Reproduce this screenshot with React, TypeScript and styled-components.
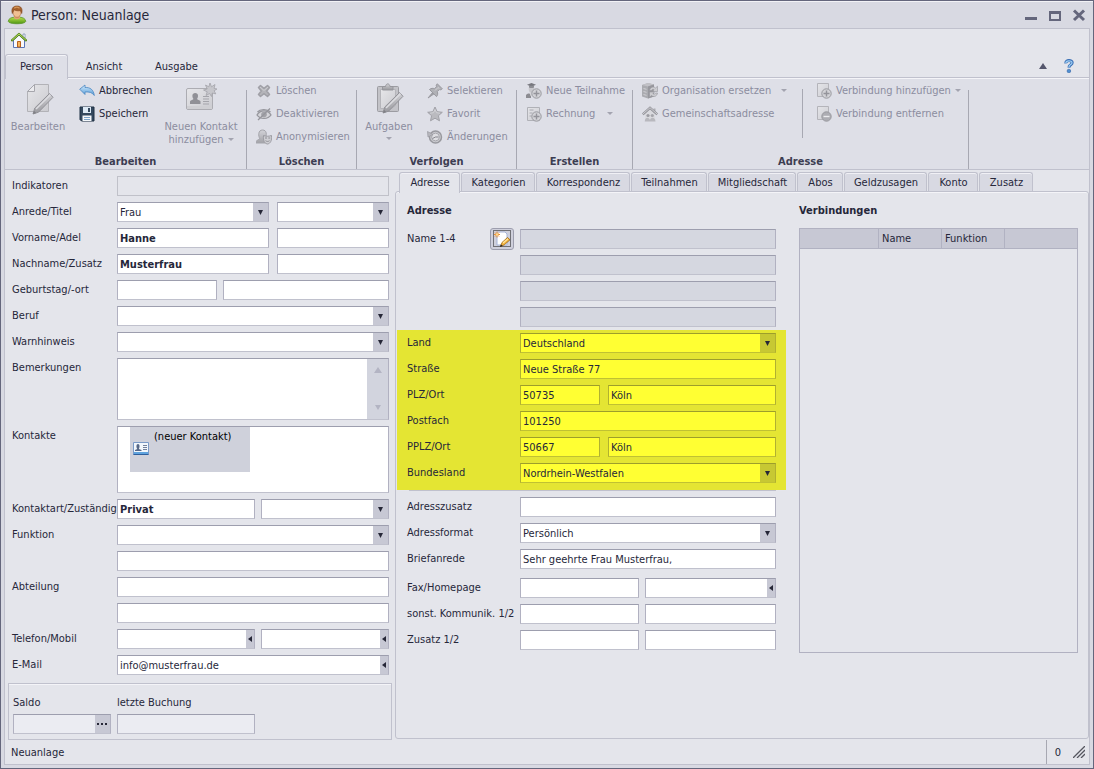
import React from 'react';
import styled, { createGlobalStyle, css } from 'styled-components';

const c = {
  frame: '#64667c',
  chrome: '#d8d9e2',
  panel: '#e4e5eb',
  ribbon: '#dedfe7',
  line: '#c0c1cd',
  divider: '#a7a8b2',
  text: '#26273a',
  muted: '#8c8d9f',
  button: '#c7c8d4',
};

const GlobalStyle = createGlobalStyle`
  * { box-sizing: border-box; }
  body { margin: 0; background: ${c.chrome}; }
  body, input, select, textarea, button, table {
    font-family: "DejaVu Sans Condensed", "DejaVu Sans", sans-serif;
    font-size: 11px;
    line-height: 14px;
    color: ${c.text};
  }
  button { margin: 0; padding: 0; border: 0; background: none; }
`;

/* ---------- window ---------- */

const Window = styled.div`
  display: flex;
  flex-direction: column;
  min-height: 100vh;
  padding: 0 3px 3px;
  border: 1px solid ${c.frame};
  background: ${c.chrome};
  box-shadow: inset 0 1px 0 #f2f2f6;
`;

const TitleBar = styled.header`
  display: flex;
  align-items: center;
  gap: 4px;
  height: 27px;
  padding: 0 1px 0 3px;
`;

const Title = styled.h1`
  flex: 1;
  margin: 0;
  font-size: 14px;
  line-height: 18px;
  font-weight: 400;
`;

const WindowButton = styled.button`
  display: grid;
  place-items: center;
  width: 20px;
  height: 20px;
`;

const Client = styled.div`
  flex: 1;
  display: flex;
  flex-direction: column;
  border: 1px solid ${c.line};
  background: ${c.panel};
`;

const QuickBar = styled.div`
  display: flex;
  align-items: center;
  height: 25px;
  padding: 0 6px;
`;

/* ---------- ribbon ---------- */

const RibbonTabs = styled.div`
  display: flex;
  align-items: stretch;
  height: 24px;
  padding-right: 12px;
  border-bottom: 1px solid ${c.line};
`;

const RibbonTab = styled.button<{ $active?: boolean }>`
  min-width: 60px;
  margin-right: 10px;
  padding: 2px 10px 0;
  border: 1px solid transparent;
  ${p =>
    p.$active &&
    css`
      min-width: 63px;
      margin-bottom: -2px;
      margin-right: 6px;
      border-color: ${c.line};
      border-bottom: 0;
      border-radius: 3px 3px 0 0;
      background: ${c.ribbon};
      box-shadow: inset 0 1px 0 #f4f4f8;
      padding-bottom: 2px;
      z-index: 1;
    `}
`;

const Spacer = styled.div`
  flex: 1;
`;

const TabTool = styled.button`
  display: grid;
  place-items: center;
  width: 16px;
  margin-left: 10px;
`;

const Ribbon = styled.div`
  display: flex;
  border-bottom: 1px solid ${c.line};
  background: ${c.ribbon};
  box-shadow: inset 0 1px 0 #f4f4f8;
`;

const Group = styled.section<{ $width: number }>`
  display: flex;
  flex-direction: column;
  width: ${p => p.$width}px;
  height: 91px;
  padding-top: 1px;
`;

const GroupBody = styled.div<{ $inset: number }>`
  flex: 1;
  display: flex;
  align-items: flex-start;
  padding-left: ${p => p.$inset}px;
`;

const GroupTitle = styled.h2`
  margin: 0;
  font-size: 11px;
  line-height: 14px;
  font-weight: 700;
  text-align: center;
  color: #3c3d52;
`;

const GroupDivider = styled.div`
  width: 1px;
  margin-top: 12px;
  background: ${c.divider};
`;

const InnerDivider = styled.div`
  width: 1px;
  height: 49px;
  margin-top: 10px;
  background: ${c.divider};
`;

const Commands = styled.div<{ $width: number }>`
  display: flex;
  flex-direction: column;
  width: ${p => p.$width}px;
`;

const Command = styled.button`
  display: flex;
  align-items: center;
  gap: 4px;
  height: 23px;
  white-space: nowrap;
  text-align: left;
  &:disabled { color: ${c.muted}; }
  svg { flex: none; }
  &:disabled svg { opacity: 0.85; }
`;

const Caret = styled.span<{ $gap?: number; $below?: boolean }>`
  display: inline-block;
  margin-left: ${p => p.$gap ?? 4}px;
  margin-top: ${p => (p.$below ? 4 : 0)}px;
  border: 3px solid transparent;
  border-top-color: #a3a4b0;
  border-bottom: 0;
  vertical-align: 2px;
`;

const BigCommand = styled.button<{ $width: number }>`
  display: flex;
  flex-direction: column;
  align-items: center;
  width: ${p => p.$width}px;
  padding-top: 4px;
  line-height: 13px;
  white-space: nowrap;
  &:disabled { color: ${c.muted}; }
  svg { margin-bottom: 5px; }
`;

/* ---------- forms ---------- */

const Main = styled.main`
  flex: 1;
  display: grid;
  grid-template-columns: minmax(0, 390fr) minmax(0, 694fr);
`;

const PersonForm = styled.form`
  display: flex;
  flex-direction: column;
  padding: 6px 3px 0;
`;

const PersonRows = styled.div`
  display: flex;
  flex-direction: column;
  gap: 6px;
  padding: 0 3px 0 4px;
`;

const Row = styled.div<{ $label: number }>`
  display: grid;
  grid-template-columns: ${p => p.$label}px minmax(0, 1fr);
`;

const Label = styled.label`
  line-height: 20px;
  white-space: nowrap;
`;

const Split = styled.div<{ $cols: string; $gap?: number }>`
  display: grid;
  grid-template-columns: ${p => p.$cols};
  gap: ${p => p.$gap ?? 6}px;
`;

type Tone = 'plain' | 'yellow' | 'grey' | 'flat' | 'light';

const tones: Record<Tone, { bg: string; top: string; side: string; bottom: string; button: string }> = {
  plain: { bg: '#ffffff', top: '#9d9eae', side: '#b1b1c1', bottom: '#c0c1cd', button: c.button },
  yellow: { bg: '#ffff33', top: '#9d9e2b', side: '#b1b130', bottom: '#c0c133', button: '#c7c833' },
  grey: { bg: '#d5d7e0', top: '#9d9eae', side: '#b1b1c1', bottom: '#c0c1cd', button: c.button },
  flat: { bg: '#e4e5eb', top: '#c0c1c9', side: '#c0c1c9', bottom: '#c0c1c9', button: c.button },
  light: { bg: '#ebecf2', top: '#9d9eae', side: '#b1b1c1', bottom: '#c0c1cd', button: c.button },
};

const Box = styled.div<{ $tone: Tone; $height?: number }>`
  position: relative;
  display: flex;
  height: ${p => p.$height ?? 20}px;
  border: 1px solid;
  border-color: ${p => `${tones[p.$tone].top} ${tones[p.$tone].side} ${tones[p.$tone].bottom}`};
  background: ${p => tones[p.$tone].bg};
`;

const control = css<{ $bold?: boolean }>`
  flex: 1;
  width: 100%;
  min-width: 0;
  margin: 0;
  padding: 1px 2px 0;
  border: 0;
  border-radius: 0;
  outline: 0;
  background: transparent;
  font-weight: ${p => (p.$bold ? 700 : 400)};
`;

const Input = styled.input`${control}`;
const Area = styled.textarea`${control} resize: none;`;
const Select = styled.select`
  ${control}
  appearance: none;
  padding-right: 17px;
  opacity: 1;
`;

const SelectArrow = styled.span<{ $tone: Tone }>`
  position: absolute;
  top: 0;
  right: 0;
  bottom: 0;
  display: grid;
  place-items: center;
  width: 15px;
  background: ${p => tones[p.$tone].button};
  pointer-events: none;
`;

const SideButton = styled.button<{ $width: number }>`
  display: grid;
  place-items: center;
  width: ${p => p.$width}px;
  background: ${c.button};
`;

const ScrollStrip = styled.div`
  display: flex;
  flex-direction: column;
  justify-content: space-between;
  align-items: center;
  width: 21px;
  padding: 8px 0;
  background: #d2d4de;
`;

const ContactItem = styled.div`
  display: flex;
  align-items: flex-start;
  gap: 5px;
  width: 120px;
  height: 45px;
  margin-left: 12px;
  padding: 3px;
  background: #cfd1db;
  color: #000;
  svg { margin-top: 12px; }
`;

const BookingBox = styled.fieldset`
  display: grid;
  grid-template-columns: 98px 138px;
  column-gap: 6px;
  margin: 8px 0 0;
  padding: 9px 4px 5px;
  border: 1px solid ${c.line};
  box-shadow: inset 0 1px 0 #f4f4f8;
`;

const BookingLabel = styled(Label)`
  margin-bottom: 1px;
`;

/* ---------- tab area ---------- */

const TabArea = styled.section`
  display: flex;
  flex-direction: column;
  padding: 2px 0 1px;
`;

const TabList = styled.div`
  display: flex;
  gap: 1px;
  height: 19px;
  padding-left: 4px;
`;

const Tab = styled.button<{ $active?: boolean; $grow: number }>`
  width: ${p => p.$grow}px;
  padding: 2px 0 0 1px;
  border: 1px solid ${c.line};
  border-bottom: 0;
  border-radius: 3px 3px 0 0;
  background: ${p => (p.$active ? c.panel : '#d8d9e2')};
  white-space: nowrap;
  box-shadow: inset 0 1px 0 #f0f0f5;
  ${p => p.$active && css`
    margin-bottom: -2px;
    padding-bottom: 2px;
    z-index: 1;
  `}
`;

const TabPanel = styled.div`
  flex: 1;
  display: grid;
  grid-template-columns: minmax(0, 389fr) minmax(0, 302fr);
  padding-left: 1px;
  border: 1px solid ${c.line};
  border-radius: 3px;
  box-shadow: inset 0 1px 0 #f4f4f8;
`;

const Heading = styled.h2`
  margin: 0;
  padding-top: 2px;
  font-size: 11px;
  line-height: 34px;
  font-weight: 700;
`;

const Section = styled.div<{ $yellow?: boolean }>`
  display: flex;
  flex-direction: column;
  gap: 6px;
  padding: ${p => (p.$yellow ? '3px 10px 7px' : '0 10px')};
  background: ${p => (p.$yellow ? '#e4e533' : 'transparent')};
`;

const Gap = styled.div<{ $size: number }>`
  height: ${p => p.$size}px;
`;

const Rule = styled.hr`
  width: auto;
  height: 1px;
  margin: 0 10px 6px 12px;
  border: 0;
  background: ${c.line};
`;

const LabelCell = styled.div`
  display: flex;
  justify-content: space-between;
  padding-right: 6px;
`;

const NameButton = styled.button`
  display: grid;
  place-items: center;
  width: 24px;
  height: 22px;
  margin: -1px 0;
  border: 1px solid #9d9eae;
  border-radius: 3px;
  background: #cfd0dc;
`;

const Connections = styled.div`
  padding: 0 10px 0 13px;
`;

const GridFrame = styled.div`
  height: 425px;
  border: 1px solid #b1b1c1;
`;

const Grid = styled.table`
  width: 100%;
  table-layout: fixed;
  border-collapse: separate;
  border-spacing: 0;
  th {
    height: 20px;
    padding: 0 3px;
    border-right: 1px solid #b1b2c2;
    border-bottom: 1px solid #b1b2c2;
    background: ${c.button};
    font-weight: 400;
    text-align: left;
  }
  th:last-child { border-right: 0; }
`;

const StatusBar = styled.footer`
  display: flex;
  align-items: center;
  height: 24px;
  padding-left: 6px;
`;

const StatusText = styled.span`
  padding-top: 2px;
`;

const StatusCell = styled.div`
  display: flex;
  align-items: center;
  align-self: stretch;
  gap: 12px;
  padding: 0 4px 0 8px;
  border-left: 1px solid ${c.divider};
`;

/* ---------- icons ---------- */

const Svg = ({ s = 16, children }: { s?: number; children: React.ReactNode }) => (
  <svg width={s} height={s} viewBox={`0 0 ${s} ${s}`} aria-hidden="true">{children}</svg>
);

const Gradients = () => (
  <svg width="0" height="0" style={{ display: 'block' }} aria-hidden="true">
    <defs>
      <linearGradient id="metal" x1="0" y1="0" x2="0" y2="1">
        <stop offset="0" stopColor="#d2d2d6" /><stop offset="1" stopColor="#98989d" />
      </linearGradient>
      <linearGradient id="sheet" x1="0" y1="0" x2="1" y2="1">
        <stop offset="0" stopColor="#e6e6e9" /><stop offset="1" stopColor="#cbcbd0" />
      </linearGradient>
      <linearGradient id="sky" x1="0" y1="0" x2="0" y2="1">
        <stop offset="0" stopColor="#d8efff" /><stop offset="1" stopColor="#4f97d4" />
      </linearGradient>
      <linearGradient id="grass" x1="0" y1="0" x2="0" y2="1">
        <stop offset="0" stopColor="#b6e04c" /><stop offset="1" stopColor="#4f9614" />
      </linearGradient>
    </defs>
  </svg>
);

const UserIcon = () => (
  <svg width="20" height="20" viewBox="0 0 20 20" aria-hidden="true">
    <path d="M1.300 16.500c0-3 3-4 5.700-4.300h6c2.700.3 5.700 1.300 5.700 4.300-1 3-16.400 3-17.400 0z" fill="url(#grass)" stroke="#5a9428" strokeWidth=".8" />
    <path d="M7 10.500h6v2.300c-1 2-5 2-6 0z" fill="#dfa272" />
    <ellipse cx="10" cy="7.500" rx="4" ry="4.800" fill="#f0bf92" stroke="#a8683a" strokeWidth=".6" />
    <path d="M5.300 8.500C4 3.500 6 1 10 1s6 2.500 4.700 7.500l-1.200-3c-2 .6-5 .3-6.500-.8z" fill="#a5602b" stroke="#7d451c" strokeWidth=".6" />
    <path d="M7.300 3.200c1.500-1.200 3.500-1.200 5.200 0" stroke="#d6995c" strokeWidth="1.200" fill="none" />
  </svg>
);

const HomeIcon = () => (
  <Svg>
    <path d="M12 2h2v4h-2z" fill="#fff" stroke="#7b8fae" strokeWidth=".8" />
    <path d="M2.500 8 8 3l5.500 5v7.500h-11z" fill="#f8f9fd" stroke="#5b76b8" />
    <path d="M6.500 9.500h3v5.500h-3z" fill="#f4b45c" stroke="#b8601c" />
    <path d="M1 8.300 8 2l7 6.300" fill="none" stroke="#55831f" strokeWidth="2.300" strokeLinejoin="round" strokeLinecap="round" />
    <path d="M1.200 8.100 8 2l6.800 6.100" fill="none" stroke="#b6df58" />
  </Svg>
);

const Pencil = () => (
  <g>
    <path d="M10 30l1.800-6L26.500 9.500l3.500 3.800L15.500 28.200z" fill="url(#metal)" stroke="#929298" />
    <path d="M13 25 27.500 10.800" stroke="#dcdce0" strokeWidth="1.500" />
    <path d="M10 30l1-3.200 2.100 2.200z" fill="#808086" />
  </g>
);

const EditIcon = () => (
  <Svg s={32}>
    <path d="M12.500 1.500h14v27h-21v-20z" fill="url(#sheet)" stroke="#b2b2b7" />
    <path d="M12.500 1.500v7h-7z" fill="#ebebee" stroke="#a6a6ac" />
    <g transform="translate(1 1)"><Pencil /></g>
  </Svg>
);

const ContactCardIcon = () => (
  <Svg s={32}>
    <rect x="1.500" y="5.500" width="26" height="21" rx="1.500" fill="url(#sheet)" stroke="#acacb2" />
    <path d="M2 23h25v3H2z" fill="#cfcfd3" />
    <path d="M5 21v-2.500c0-1.300 2.500-1.500 3.500-2.500-1.500-2-1.800-6 1.700-6s3.300 4 1.800 6c1 1 3.500 1.200 3.500 2.500V21z" fill="#909096" />
    <path d="M18 13.500h6M18 16h6M18 18.500h6M18 21h6" stroke="#a5a5ab" />
    <path d="m25 0 1.500 3.800L30 1.500l-.9 3.900 2.900.6-2.900 1.700 1.700 3.200-3.500-.9-.8 3.500-1.900-3-3.600 2 1.200-3.700L18.500 7l3.700-1-1.700-4 3.300 1.800z" fill="#c6c6cb" stroke="#a3a3a9" strokeWidth=".8" />
  </Svg>
);

const TaskIcon = () => (
  <Svg s={32}>
    <rect x="4.500" y="3.500" width="21" height="25" rx="1" fill="#c3c3c8" stroke="#9c9ca2" />
    <path d="M7.500 6.500h15v16l-4 3h-11z" fill="url(#sheet)" stroke="#b5b5ba" />
    <path d="M9.500 7V3.500h3c.5-3.500 4-3.500 4.500 0h3V7z" fill="url(#metal)" stroke="#97979d" />
    <Pencil />
  </Svg>
);

const UndoIcon = () => (
  <Svg>
    <path d="M.7 6.200 6 2v2.500c5-.3 8.500 2 9.300 8-2-3-5-3.900-9.300-3.500v2.500z" fill="url(#sky)" stroke="#4a86c2" strokeWidth=".8" strokeLinejoin="round" />
  </Svg>
);

const SaveIcon = () => (
  <Svg>
    <path d="M1 1h14v14H2.500L1 13.500z" fill="#34495f" stroke="#1f3044" />
    <path d="M4 1h8v6H4z" fill="#dce9f5" />
    <path d="M9 2h2v4H9z" fill="#34495f" />
    <path d="M3.500 9.500h9V15h-9z" fill="#f4f7fa" />
    <path d="M5 11.500h6M5 13.500h6" stroke="#7da5cc" />
  </Svg>
);

const CrossIcon = () => (
  <Svg>
    <path d="M2.500 4.500 4.500 2.500 8 5.300 11.500 2.500l2 2L10.700 8l2.800 3.500-2 2L8 10.700 4.500 13.500l-2-2L5.300 8z" fill="#adadb2" stroke="#96969c" strokeWidth="1.500" strokeLinejoin="round" />
    <path d="M4 4 8 7.500 12 4" stroke="#cacacd" fill="none" />
  </Svg>
);

const EyeOffIcon = () => (
  <Svg>
    <path d="M1 9c3-5.500 11-5.500 14 0-3 4.500-11 4.500-14 0z" fill="#d4d4d8" stroke="#8a8a90" strokeWidth="1.300" />
    <circle cx="8" cy="8.500" r="2.800" fill="#98989e" />
    <path d="M1.500 6C4 3 11 2.500 14.500 6M2 14 14 2.500" stroke="#8a8a90" strokeWidth="1.300" fill="none" />
  </Svg>
);

const MaskIcon = () => (
  <Svg>
    <path d="M0 14c0-3 2.500-3.500 4-4C2 7 2 1 6.500 1S11 6 9 10c2 .5 3 1.500 3 4z" fill="url(#metal)" stroke="#9c9ca2" />
    <path d="M7.500 6.500c2.500 1 5 1 8 0 .5 5-1 8-4 8.500-3-.5-4.500-3.500-4-8.500z" fill="#cdcdd1" stroke="#909096" />
    <path d="M9 9h2M12.300 9h2M9.500 11.700c1.300 1 2.800 1 4 0" stroke="#808086" fill="none" />
  </Svg>
);

const PinIcon = () => (
  <Svg>
    <path d="m1 15 5-6 1.500 1.500z" fill="#909096" stroke="#909096" />
    <path d="M2.500 6.500c1.700-1.500 3.500-1.300 5-.8l2-2C9 2.500 9.300 1.500 10.300.8l5 5c-.8 1-1.800 1.200-3 .8l-2 2c.6 1.700.6 3.700-.8 5z" fill="#a9a9ae" stroke="#8d8d93" />
    <path d="m8 7.500 3-3 1.500 1.300" stroke="#cfcfd3" fill="none" />
  </Svg>
);

const StarIcon = () => (
  <Svg>
    <path d="m8 1 2.100 4.700 5.200.6-3.900 3.400 1.100 5.100L8 12.200l-4.500 2.600 1.100-5.100L.7 6.300l5.200-.6z" fill="#b4b4b9" stroke="#97979d" strokeLinejoin="round" />
    <path d="M3 7.200 6.500 6.700 8 3.500l1.500 3.200 3.500.5" fill="none" stroke="#cfcfd3" />
  </Svg>
);

const HistoryIcon = () => (
  <Svg>
    <circle cx="8.500" cy="8" r="6" fill="#c9c9cd" stroke="#8d8d93" strokeWidth="1.500" />
    <circle cx="8.500" cy="8" r="3.900" fill="#dedee2" stroke="#9c9ca2" />
    <path d="M5.500 9.500 8.500 8h3" stroke="#77777c" fill="none" />
    <path d="M.5 2.500 1 8l5-2.500z" fill="#b2b2b7" stroke="#8d8d93" strokeWidth=".7" />
  </Svg>
);

const Badge = ({ minus }: { minus?: boolean }) => (
  <g>
    <circle cx="10.500" cy="10.500" r="4.700" fill={minus ? '#a5a5aa' : '#d0d0d4'} stroke="#8d8d93" />
    <path d={minus ? 'M7.500 10.500h6' : 'M7.500 10.500h6M10.500 7.500v6'} stroke={minus ? '#eeeef0' : '#88888e'} strokeWidth="1.400" />
  </g>
);

const GraduateIcon = () => (
  <Svg>
    <path d="M0 15v-3c1-1.500 2-1.500 3.500-1.500L5 12v3z" fill="#7e7e84" />
    <path d="M3.500 9h4v4h-3z" fill="#d5d5d9" />
    <ellipse cx="5.500" cy="6" rx="2.800" ry="3.500" fill="#c3c3c8" />
    <path d="M1 1.800 5.500 0 10 1.800 5.500 3.700z" fill="#66666c" />
    <path d="M3 2.800v1.700c1.700.8 3.300.8 5 0V2.800z" fill="#808086" />
    <Badge />
  </Svg>
);

const InvoiceIcon = () => (
  <Svg>
    <path d="M1.500 1.500h12v13h-12z" fill="url(#sheet)" stroke="#a9a9af" />
    <path d="M3.500 4h4M3.500 7h3M3.500 10h2" stroke="#a0a0a6" />
    <Badge />
  </Svg>
);

const PageIcon = ({ minus }: { minus?: boolean }) => (
  <Svg>
    <path d="M1.500.5h11v13h-11z" fill="url(#sheet)" stroke="#adadb3" />
    <Badge minus={minus} />
  </Svg>
);

const ReplaceIcon = () => (
  <Svg>
    <path d="m0 2 6-2 6 1.500v12L6 15.500l-6-2z" fill="#a2a2a7" />
    <path d="m0 2 6-2 6 1.500-6 2z" fill="#bcbcc1" />
    <path d="M6 3.500v12l6-2v-12z" fill="#8b8b91" />
    <path d="M1.500 5.500 4.500 6.300M1.500 8.500l3 .8M1.500 11.500l3 .8" stroke="#cdcdd1" fill="none" />
    <path d="M7.500 7.500c.5-3.500 4-4.500 6-2.500l2-1.700v5.200h-5l1.600-1.700c-1-.8-2.400-.3-2.600.7zM15.500 10c-.5 3.500-4 4.500-6 2.500l-2 1.700V9h5l-1.600 1.700c1 .8 2.400.3 2.600-.7z" fill="#c9c9cd" stroke="#88888e" strokeWidth=".6" />
  </Svg>
);

const FamilyHomeIcon = () => (
  <Svg>
    <path d="M11.500 2.500h2v4h-2z" fill="#a5a5ab" />
    <path d="M3 8 8 3.500 13 8v7H3z" fill="#d9d9dd" />
    <path d="M.8 8.300 8 1.800l7.200 6.500" fill="none" stroke="#85858b" strokeWidth="2.400" />
    <path d="M1 8 8 1.700 15 8" fill="none" stroke="#cdcdd1" />
    <circle cx="6" cy="9.500" r="1.600" fill="#909096" /><circle cx="10.300" cy="9.500" r="1.600" fill="#9c9ca2" />
    <path d="M2.800 15.500c0-5 5-5 5.500 0zm5 0c0-5 5.500-5 5.700 0z" fill="#b2b2b7" />
  </Svg>
);

const CardIcon = () => (
  <svg width="16" height="14" viewBox="0 0 16 14" aria-hidden="true">
    <path d="M.5.500h15v12H.5z" fill="#f2f7fc" stroke="#7b9bc8" />
    <path d="M1 10h14v2H1z" fill="#5fa3de" />
    <path d="M.5 12.500h15" stroke="#2f5f9c" />
    <path d="M2 9V8l2.300-1C3 5 3.200 2 5 2s2 3 .8 5L8.500 8v1z" fill="#566786" />
    <path d="M10 3.500h4M10 5.500h4M10 7.500h4" stroke="#72809b" />
  </svg>
);

const NewNoteIcon = () => (
  <svg width="20" height="18" viewBox="0 0 20 18" aria-hidden="true">
    <rect x="1.500" y=".5" width="17" height="16" fill="none" stroke="#111" strokeDasharray="1 1" />
    <path d="M5 2h8l2 2v11H5z" fill="#fff" stroke="#a5b4d8" />
    <path d="M8.500 16.500 10 12.500l5.500-5 2.500 2.300-5.700 5z" fill="#f3b33c" stroke="#9d6412" strokeWidth=".8" />
    <path d="m11 13 5-4.300" stroke="#ffe6a0" strokeWidth="1.200" />
    <path d="m8 17 .8-2.500 1.900 1.600z" fill="#222" />
    <path d="M5 1.500v6M2 4.500h6M3 2.500l4 4M7 2.500l-4 4" stroke="#e88a30" />
    <circle cx="5" cy="4.500" r="1.300" fill="#ffd98a" />
  </svg>
);

const HelpIcon = () => (
  <svg width="10" height="14" viewBox="0 0 10 14" aria-hidden="true">
    <path d="M1.800 4.300C1.500.8 8.300.8 8.200 3.800 8.100 6 5 5.600 4.900 8.600" fill="none" stroke="#3a6fb5" strokeWidth="3" />
    <path d="M1.800 4C1.800 1.300 8 1 8 3.700 8 5.700 5 5.500 4.900 8.300" fill="none" stroke="#9fd0f5" strokeWidth="1.200" />
    <circle cx="4.900" cy="12" r="1.800" fill="#4f8fd0" stroke="#2f62a8" strokeWidth=".6" />
  </svg>
);

const Down = () => (
  <svg width="5" height="5" viewBox="0 0 5 5" aria-hidden="true"><path d="M0 0h5L2.500 5z" fill="#262737" /></svg>
);
const Left = () => (
  <svg width="4" height="6" viewBox="0 0 4 6" aria-hidden="true"><path d="M4 0v6L0 3z" fill="#262737" /></svg>
);
const Triangle = ({ up, dark }: { up?: boolean; dark?: boolean }) => (
  <svg width="8" height="6" viewBox="0 0 8 6" aria-hidden="true">
    <path d={up ? 'M0 6h8L4 0z' : 'M1 0h6L4 5z'} fill={dark ? '#55576d' : '#b3b4c3'} />
  </svg>
);

/* ---------- field helpers ---------- */

type FieldProps = { id?: string; name?: string; value?: string; bold?: boolean; tone?: Tone };

const TextField = ({ id, name, value = '', bold, tone = 'plain' }: FieldProps) => (
  <Box $tone={tone}>
    <Input id={id} aria-label={name} defaultValue={value} $bold={bold} readOnly={tone !== 'plain' && tone !== 'yellow'} />
  </Box>
);

const SelectField = ({ id, name, value = '', tone = 'plain' }: FieldProps) => (
  <Box $tone={tone}>
    <Select id={id} aria-label={name} defaultValue={value}>
      <option value={value}>{value}</option>
    </Select>
    <SelectArrow $tone={tone}><Down /></SelectArrow>
  </Box>
);

const ActionField = ({ id, name, value = '', action }: FieldProps & { action: string }) => (
  <Box $tone="plain">
    <Input id={id} aria-label={name} defaultValue={value} />
    <SideButton type="button" $width={8} aria-label={action}><Left /></SideButton>
  </Box>
);

const PersonRow = ({ label, id, children }: { label?: string; id?: string; children: React.ReactNode }) => (
  <Row $label={105}>
    {label ? <Label htmlFor={id}>{label}</Label> : <span />}
    {children}
  </Row>
);

const AddressRow = ({ label, id, children }: { label?: string; id?: string; children: React.ReactNode }) => (
  <Row $label={113}>
    {label ? <Label htmlFor={id}>{label}</Label> : <span />}
    {children}
  </Row>
);

const cols = (a: number, b: number) => `minmax(0, ${a}fr) minmax(0, ${b}fr)`;

const tabs: [string, number][] = [
  ['Adresse', 61], ['Kategorien', 74], ['Korrespondenz', 94], ['Teilnahmen', 76], ['Mitgliedschaft', 88],
  ['Abos', 46], ['Geldzusagen', 83], ['Konto', 50], ['Zusatz', 54],
];

export default function App() {
  return (
    <>
      <GlobalStyle />
      <Window>
        <Gradients />
        <TitleBar>
          <UserIcon />
          <Title>Person: Neuanlage</Title>
          <Split $cols="20px 20px 20px" $gap={4}>
            <WindowButton aria-label="Minimieren">
              <Svg s={14}><path d="M1 9h12v3H1z" fill={c.frame} /></Svg>
            </WindowButton>
            <WindowButton aria-label="Maximieren">
              <Svg s={14}><path d="M1 3h12v10H1zM3 6v5h8V6z" fillRule="evenodd" fill={c.frame} /></Svg>
            </WindowButton>
            <WindowButton aria-label="Schließen">
              <Svg s={14}><path d="m2 2.500 10 9.500M12 2.500 2 12" stroke={c.frame} strokeWidth="3" /></Svg>
            </WindowButton>
          </Split>
        </TitleBar>

        <Client>
          <QuickBar><button aria-label="Startseite"><HomeIcon /></button></QuickBar>

          <RibbonTabs>
            <RibbonTab $active>Person</RibbonTab>
            <RibbonTab>Ansicht</RibbonTab>
            <RibbonTab>Ausgabe</RibbonTab>
            <Spacer />
            <TabTool aria-label="Menüband minimieren"><Triangle up dark /></TabTool>
            <TabTool aria-label="Hilfe"><HelpIcon /></TabTool>
          </RibbonTabs>

          <Ribbon>
            <Group $width={241}>
              <GroupBody $inset={3}>
                <BigCommand $width={60} disabled><EditIcon />Bearbeiten</BigCommand>
                <GroupBody $inset={11}>
                  <Commands $width={78}>
                    <Command><UndoIcon />Abbrechen</Command>
                    <Command><SaveIcon />Speichern</Command>
                  </Commands>
                  <BigCommand $width={88} disabled>
                    <ContactCardIcon />
                    <span>Neuen Kontakt<br />hinzufügen<Caret /></span>
                  </BigCommand>
                </GroupBody>
              </GroupBody>
              <GroupTitle>Bearbeiten</GroupTitle>
            </Group>
            <GroupDivider />

            <Group $width={109}>
              <GroupBody $inset={9}>
                <Commands $width={98}>
                  <Command disabled><CrossIcon />Löschen</Command>
                  <Command disabled><EyeOffIcon />Deaktivieren</Command>
                  <Command disabled><MaskIcon />Anonymisieren</Command>
                </Commands>
              </GroupBody>
              <GroupTitle>Löschen</GroupTitle>
            </Group>
            <GroupDivider />

            <Group $width={159}>
              <GroupBody $inset={2}>
                <BigCommand $width={60} disabled><TaskIcon />Aufgaben<Caret $gap={0} $below /></BigCommand>
                <GroupBody $inset={8}>
                  <Commands $width={84}>
                    <Command disabled><PinIcon />Selektieren</Command>
                    <Command disabled><StarIcon />Favorit</Command>
                    <Command disabled><HistoryIcon />Änderungen</Command>
                  </Commands>
                </GroupBody>
              </GroupBody>
              <GroupTitle>Verfolgen</GroupTitle>
            </Group>
            <GroupDivider />

            <Group $width={115}>
              <GroupBody $inset={9}>
                <Commands $width={100}>
                  <Command disabled><GraduateIcon />Neue Teilnahme</Command>
                  <Command disabled><InvoiceIcon />Rechnung<Caret $gap={8} /></Command>
                </Commands>
              </GroupBody>
              <GroupTitle>Erstellen</GroupTitle>
            </Group>
            <GroupDivider />

            <Group $width={335}>
              <GroupBody $inset={9}>
                <Commands $width={160}>
                  <Command disabled><ReplaceIcon />Organisation ersetzen<Caret $gap={6} /></Command>
                  <Command disabled><FamilyHomeIcon />Gemeinschaftsadresse</Command>
                </Commands>
                <InnerDivider />
                <GroupBody $inset={13}>
                  <Commands $width={140}>
                    <Command disabled><PageIcon />Verbindung hinzufügen<Caret $gap={0} /></Command>
                    <Command disabled><PageIcon minus />Verbindung entfernen</Command>
                  </Commands>
                </GroupBody>
              </GroupBody>
              <GroupTitle>Adresse</GroupTitle>
            </Group>
            <GroupDivider />
          </Ribbon>

          <Main>
            <PersonForm>
              <PersonRows>
                <PersonRow label="Indikatoren" id="ind"><TextField id="ind" tone="flat" /></PersonRow>
                <PersonRow label="Anrede/Titel" id="anrede">
                  <Split $cols={cols(152, 112)} $gap={8}>
                    <SelectField id="anrede" value="Frau" />
                    <SelectField name="Titel" />
                  </Split>
                </PersonRow>
                <PersonRow label="Vorname/Adel" id="vorname">
                  <Split $cols={cols(152, 112)} $gap={8}>
                    <TextField id="vorname" value="Hanne" bold />
                    <TextField name="Adel" />
                  </Split>
                </PersonRow>
                <PersonRow label="Nachname/Zusatz" id="nachname">
                  <Split $cols={cols(152, 112)} $gap={8}>
                    <TextField id="nachname" value="Musterfrau" bold />
                    <TextField name="Zusatz" />
                  </Split>
                </PersonRow>
                <PersonRow label="Geburtstag/-ort" id="geburt">
                  <Split $cols={cols(100, 166)}>
                    <TextField id="geburt" />
                    <TextField name="Geburtsort" />
                  </Split>
                </PersonRow>
                <PersonRow label="Beruf" id="beruf"><SelectField id="beruf" /></PersonRow>
                <PersonRow label="Warnhinweis" id="warn"><SelectField id="warn" /></PersonRow>
                <PersonRow label="Bemerkungen" id="bem">
                  <Box $tone="plain" $height={62}>
                    <Area id="bem" />
                    <ScrollStrip><Triangle up /><Triangle /></ScrollStrip>
                  </Box>
                </PersonRow>
                <PersonRow label="Kontakte">
                  <Box $tone="plain" $height={67}>
                    <ContactItem><CardIcon />(neuer Kontakt)</ContactItem>
                  </Box>
                </PersonRow>
                <PersonRow label="Kontaktart/Zuständig" id="kart">
                  <Split $cols={cols(138, 128)}>
                    <TextField id="kart" value="Privat" bold />
                    <SelectField name="Zuständig" />
                  </Split>
                </PersonRow>
                <PersonRow label="Funktion" id="funk"><SelectField id="funk" /></PersonRow>
                <PersonRow><TextField name="Funktion 2" /></PersonRow>
                <PersonRow label="Abteilung" id="abt"><TextField id="abt" /></PersonRow>
                <PersonRow><TextField name="Abteilung 2" /></PersonRow>
                <PersonRow label="Telefon/Mobil" id="tel">
                  <Split $cols={cols(138, 128)}>
                    <ActionField id="tel" action="Telefon wählen" />
                    <ActionField name="Mobil" action="Mobil wählen" />
                  </Split>
                </PersonRow>
                <PersonRow label="E-Mail" id="mail">
                  <ActionField id="mail" value="info@musterfrau.de" action="E-Mail schreiben" />
                </PersonRow>
              </PersonRows>

              <BookingBox>
                <BookingLabel htmlFor="saldo">Saldo</BookingLabel>
                <BookingLabel htmlFor="buchung">letzte Buchung</BookingLabel>
                <Box $tone="light">
                  <Input id="saldo" readOnly />
                  <SideButton type="button" $width={15} aria-label="Saldo anzeigen">
                    <svg width="11" height="2" viewBox="0 0 11 2" aria-hidden="true">
                      <path d="M0 0h2v2H0zM4 0h2v2H4zM8 0h2v2H8z" fill="#262737" />
                    </svg>
                  </SideButton>
                </Box>
                <TextField id="buchung" tone="light" />
              </BookingBox>
            </PersonForm>

            <TabArea>
              <TabList role="tablist">
                {tabs.map(([t, w], i) => (
                  <Tab key={t} role="tab" aria-selected={i === 0} $active={i === 0} $grow={w}>{t}</Tab>
                ))}
              </TabList>
              <TabPanel role="tabpanel">
                <div>
                  <Section><Heading>Adresse</Heading></Section>
                  <Gap $size={1} />
                  <Section>
                    <Row $label={113}>
                      <LabelCell>
                        <Label htmlFor="name1">Name 1-4</Label>
                        <NameButton type="button" aria-label="Namen bearbeiten"><NewNoteIcon /></NameButton>
                      </LabelCell>
                      <TextField id="name1" tone="grey" />
                    </Row>
                    <AddressRow><TextField name="Name 2" tone="grey" /></AddressRow>
                    <AddressRow><TextField name="Name 3" tone="grey" /></AddressRow>
                    <AddressRow><TextField name="Name 4" tone="grey" /></AddressRow>
                  </Section>
                  <Gap $size={3} />
                  <Section $yellow>
                    <AddressRow label="Land" id="land"><SelectField id="land" value="Deutschland" tone="yellow" /></AddressRow>
                    <AddressRow label="Straße" id="str"><TextField id="str" value="Neue Straße 77" tone="yellow" /></AddressRow>
                    <AddressRow label="PLZ/Ort" id="plz">
                      <Split $cols={cols(80, 168)} $gap={8}>
                        <TextField id="plz" value="50735" tone="yellow" />
                        <TextField name="Ort" value="Köln" tone="yellow" />
                      </Split>
                    </AddressRow>
                    <AddressRow label="Postfach" id="pf"><TextField id="pf" value="101250" tone="yellow" /></AddressRow>
                    <AddressRow label="PPLZ/Ort" id="pplz">
                      <Split $cols={cols(80, 168)} $gap={8}>
                        <TextField id="pplz" value="50667" tone="yellow" />
                        <TextField name="Postfach-Ort" value="Köln" tone="yellow" />
                      </Split>
                    </AddressRow>
                    <AddressRow label="Bundesland" id="bl"><SelectField id="bl" value="Nordrhein-Westfalen" tone="yellow" /></AddressRow>
                  </Section>
                  <Rule />
                  <Section>
                    <AddressRow label="Adresszusatz" id="az"><TextField id="az" /></AddressRow>
                    <AddressRow label="Adressformat" id="af"><SelectField id="af" value="Persönlich" /></AddressRow>
                    <AddressRow label="Briefanrede" id="ba"><TextField id="ba" value="Sehr geehrte Frau Musterfrau," /></AddressRow>
                  </Section>
                  <Gap $size={9} />
                  <Section>
                    <AddressRow label="Fax/Homepage" id="fax">
                      <Split $cols={cols(119, 131)}>
                        <TextField id="fax" />
                        <ActionField name="Homepage" action="Homepage öffnen" />
                      </Split>
                    </AddressRow>
                    <AddressRow label="sonst. Kommunik. 1/2" id="sk">
                      <Split $cols={cols(119, 131)}>
                        <TextField id="sk" />
                        <TextField name="sonstige Kommunikation 2" />
                      </Split>
                    </AddressRow>
                    <AddressRow label="Zusatz 1/2" id="zs">
                      <Split $cols={cols(119, 131)}>
                        <TextField id="zs" />
                        <TextField name="Zusatz 2" />
                      </Split>
                    </AddressRow>
                  </Section>
                </div>

                <Connections>
                  <Heading>Verbindungen</Heading>
                  <GridFrame>
                    <Grid>
                      <colgroup>
                        <col width="79" /><col width="63" /><col width="63" /><col />
                      </colgroup>
                      <thead>
                        <tr><th /><th>Name</th><th>Funktion</th><th /></tr>
                      </thead>
                      <tbody />
                    </Grid>
                  </GridFrame>
                </Connections>
              </TabPanel>
            </TabArea>
          </Main>

          <StatusBar>
            <StatusText>Neuanlage</StatusText>
            <Spacer />
            <StatusCell>
              <StatusText>0</StatusText>
              <svg width="12" height="12" viewBox="0 0 12 12" aria-hidden="true">
                <path d="M0 12 12 0M4 12l8-8M8 12l4-4" stroke="#55565f" strokeWidth="1.300" />
              </svg>
            </StatusCell>
          </StatusBar>
        </Client>
      </Window>
    </>
  );
}
